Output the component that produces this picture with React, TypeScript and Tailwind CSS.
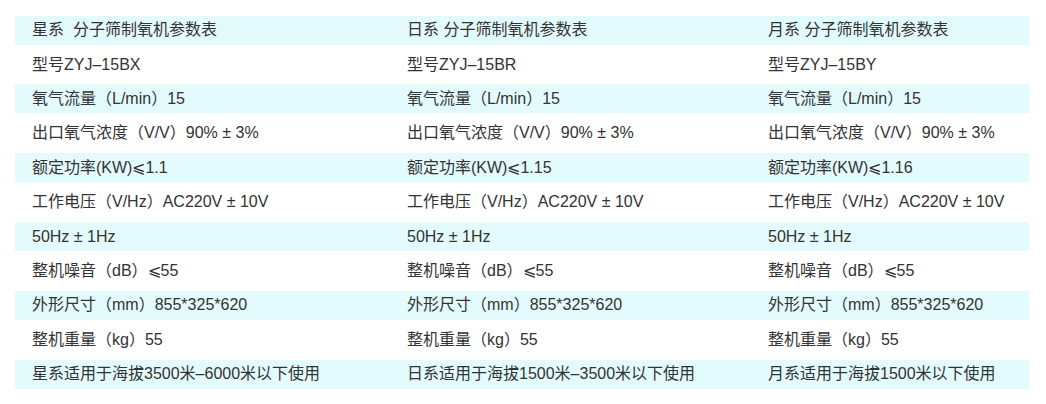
// Spec sheet: three oxygen concentrator models side by side, alternating cyan bands.

const ROWS: [string, string, string][] = [
  ['星系\u00a0\u00a0分子筛制氧机参数表', '日系 分子筛制氧机参数表', '月系 分子筛制氧机参数表'],
  ['型号ZYJ–15BX', '型号ZYJ–15BR', '型号ZYJ–15BY'],
  ['氧气流量（L/min）15', '氧气流量（L/min）15', '氧气流量（L/min）15'],
  ['出口氧气浓度（V/V）90% ± 3%', '出口氧气浓度（V/V）90% ± 3%', '出口氧气浓度（V/V）90% ± 3%'],
  ['额定功率(KW)⩽1.1', '额定功率(KW)⩽1.15', '额定功率(KW)⩽1.16'],
  ['工作电压（V/Hz）AC220V ± 10V', '工作电压（V/Hz）AC220V ± 10V', '工作电压（V/Hz）AC220V ± 10V'],
  ['50Hz ± 1Hz', '50Hz ± 1Hz', '50Hz ± 1Hz'],
  ['整机噪音（dB）⩽55', '整机噪音（dB）⩽55', '整机噪音（dB）⩽55'],
  ['外形尺寸（mm）855*325*620', '外形尺寸（mm）855*325*620', '外形尺寸（mm）855*325*620'],
  ['整机重量（kg）55', '整机重量（kg）55', '整机重量（kg）55'],
  ['星系适用于海拔3500米–6000米以下使用', '日系适用于海拔1500米–3500米以下使用', '月系适用于海拔1500米以下使用'],
];

export default function App() {
  return (
    <div
      className="w-[1046px] h-[404px] bg-white pt-[13px] pl-[15px] pr-[17px] text-[16px] text-[#333] overflow-hidden"
      style={{ fontFamily: '"Liberation Sans", "Noto Sans CJK SC", sans-serif' }}
    >
      {ROWS.map((row, i) => (
        <div key={i} className="h-[34.4px] flex items-center">
          <div
            className={
              'w-full h-[29px] grid grid-cols-[375px_361px_1fr] items-center ' +
              (i % 2 === 0 ? 'bg-[#e3fbfc]' : '')
            }
          >
            {row.map((cell, j) => (
              <div key={j} className="whitespace-pre leading-none pl-[17px]">
                {cell}
              </div>
            ))}
          </div>
        </div>
      ))}
    </div>
  );
}
